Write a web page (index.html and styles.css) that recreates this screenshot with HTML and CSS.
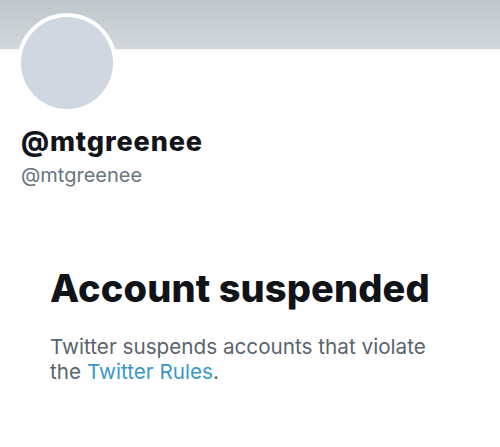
FILE: index.html
```html
<!DOCTYPE html>
<html lang="en">
<head>
<meta charset="utf-8">
<title>@mtgreenee</title>
<link rel="stylesheet" href="styles.css">
</head>
<body>
<div class="page">
  <div class="banner"></div>
  <div class="avatar"><div class="avatar-inner"></div></div>
  <div class="names">
    <div class="display-name">@mtgreenee</div>
    <div class="handle">@mtgreenee</div>
  </div>
  <div class="notice">
    <h1 class="title">Account suspended</h1>
    <p class="desc">Twitter suspends accounts that violate the <a class="link" href="#">Twitter Rules</a>.</p>
  </div>
</div>
</body>
</html>
```
FILE: styles.css
```css
html, body {
  margin: 0;
  padding: 0;
  background: #ffffff;
}
body {
  font-family: Inter, "Noto Sans", "Liberation Sans", sans-serif;
  width: 500px;
  height: 447px;
  overflow: hidden;
}
.page {
  display: flex;
  flex-direction: column;
}
.banner {
  height: 49px;
  background: linear-gradient(#c0c7ca, #d2d8db);
  box-shadow: 0 1px 2px rgba(0,0,0,0.06);
}
.avatar {
  width: 100px;
  height: 100px;
  margin-top: -36px;
  margin-left: 17px;
  border-radius: 50%;
  background: #ffffff;
  display: flex;
  align-items: center;
  justify-content: center;
  position: relative;
}
.avatar-inner {
  width: 92px;
  height: 92px;
  border-radius: 50%;
  background: #d0d7e1;
}
.names {
  padding: 13px 0 0 21px;
}
.display-name {
  font-size: 27px;
  line-height: 32px;
  font-weight: 800;
  color: #111418;
  letter-spacing: 0.9px;
}
.handle {
  font-size: 20px;
  line-height: 26px;
  color: #687580;
  margin-top: 4px;
}
.notice {
  padding: 78px 0 0 50px;
}
.title {
  margin: 0;
  font-size: 38px;
  line-height: 44px;
  font-weight: 800;
  color: #101317;
  letter-spacing: 0.1px;
}
.desc {
  margin: 24px 0 0 0;
  font-size: 20.7px;
  line-height: 25px;
  color: #59646e;
  width: 400px;
}
.link {
  color: #3b97c9;
  text-decoration: none;
}
```
